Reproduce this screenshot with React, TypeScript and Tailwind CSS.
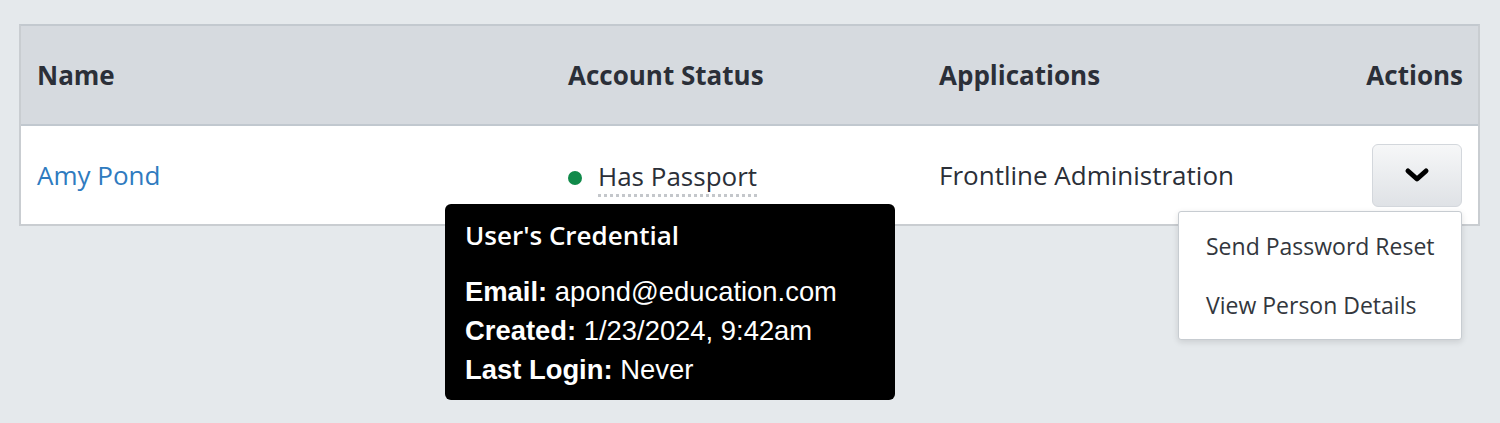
import React from "react";

export default function App() {
  const os = { fontFamily: '"Open Sans", "Noto Sans", sans-serif' };
  return (
    <div className="w-[1500px] h-[423px] bg-[#e5e9ec] pt-[24px] pl-[19px] pr-[20px] relative overflow-hidden" style={os}>
      <div className="border-2 border-[#c9cdd1] border-t-[#c3c9cf] bg-white">
        <div className="grid grid-cols-[529px_371px_1fr_auto] h-[100px] items-center bg-[#d6dadf] border-b-2 border-[#c1c8cf] text-[26px] font-bold text-[#2b2f38] pt-[1px]">
          <div className="pl-[16px]">Name</div>
          <div className="pl-[18px]">Account Status</div>
          <div className="pl-[18px]">Applications</div>
          <div className="pr-[15px] text-right">Actions</div>
        </div>
        <div className="grid grid-cols-[529px_371px_1fr_auto] h-[98px] items-center text-[26px] text-[#2b2f38]">
          <div className="pl-[16px] text-[#2f7bbf]">Amy Pond</div>
          <div className="pl-[18px] relative">
            <div className="flex items-center gap-[16px] pt-[5px]">
              <span className="w-[14px] h-[14px] rounded-full bg-[#108a4a] inline-block"></span>
              <span className="border-b-[3px] border-dotted border-[#c4c7cb] leading-[34px] pb-[1px]">Has Passport</span>
            </div>
          </div>
          <div className="pl-[18px]">Frontline Administration</div>
          <div className="pr-[16px] flex justify-end">
            <button className="w-[90px] h-[63px] rounded-[6px] border border-[#d3d7dc] bg-gradient-to-b from-[#f6f7f8] to-[#dfe2e6] flex items-center justify-center">
              <svg width="26" height="18" viewBox="0 0 26 18">
                <polyline points="4,5 13,13 22,5" fill="none" stroke="#000" strokeWidth="5" strokeLinecap="round" strokeLinejoin="round" />
              </svg>
            </button>
          </div>
        </div>
      </div>

      <div className="absolute left-[445px] top-[204px] w-[450px] h-[196px] bg-black rounded-[6px] text-white pl-[20px] pt-[13px]">
        <div className="text-[26px] font-semibold leading-[36px]" style={os}>User's Credential</div>
        <div className="mt-[19px] text-[27.4px] leading-[39px]" style={{ fontFamily: '"Liberation Sans", Arial, sans-serif' }}>
          <div><b>Email:</b> apond@education.com</div>
          <div><b>Created:</b> 1/23/2024, 9:42am</div>
          <div><b>Last Login:</b> Never</div>
        </div>
      </div>

      <div className="absolute left-[1178px] top-[211px] w-[284px] h-[129px] bg-white border border-[#c7ccd1] rounded-[3px] shadow-[0_2px_6px_rgba(0,0,0,0.12)] text-[23px] text-[#33373d] pt-[15px]">
        <div className="pl-[27px] leading-[38px]">Send Password Reset</div>
        <div className="pl-[27px] leading-[38px] mt-[21px]">View Person Details</div>
      </div>
    </div>
  );
}
